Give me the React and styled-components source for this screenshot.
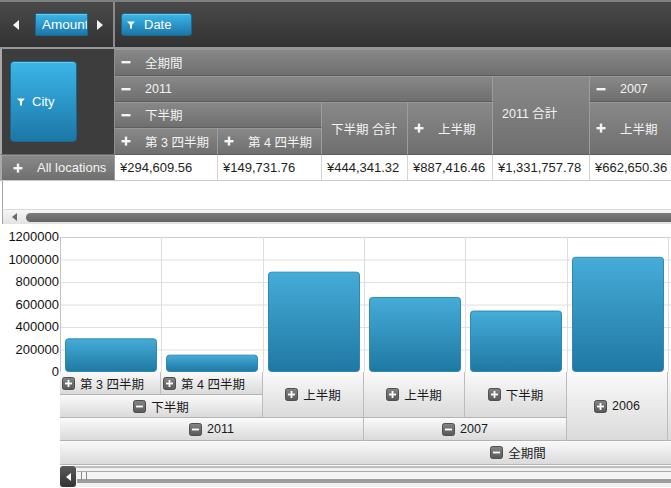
import React from 'react';
import styled, { createGlobalStyle } from 'styled-components';

const GlobalStyle = createGlobalStyle`
  html, body {
    margin: 0;
    padding: 0;
    background: #ffffff;
    overflow: hidden;
  }
  body {
    font-family: "Liberation Sans", "Noto Sans CJK JP", sans-serif;
  }
`;

const Page = styled.div`
  width: 671px;
  height: 488px;
  overflow: hidden;
  position: relative;
`;

/* ---------- field toolbar ---------- */

const Toolbar = styled.div`
  display: flex;
  height: 49px;
  box-sizing: border-box;
  border-top: 2px solid #7f7f7f;
  border-bottom: 2px solid #969696;
  background: linear-gradient(#4a4a4a, #323232);
`;

const ToolbarSection = styled.div`
  display: flex;
  align-items: center;
  width: ${p => p.$width || 'auto'};
  flex: ${p => (p.$width ? 'none' : '1')};
  box-sizing: border-box;
  padding-left: ${p => p.$pad}px;
  border-right: ${p => (p.$divider ? '2px solid #8b8b8b' : 'none')};
`;

const Arrow = styled.span`
  width: 0;
  height: 0;
  border-top: 5px solid transparent;
  border-bottom: 5px solid transparent;
  ${p => (p.$dir === 'left' ? 'border-right: 6px solid #f4f4f4;' : 'border-left: 6px solid #f4f4f4;')}
  margin: ${p => p.$margin};
`;

const FieldButton = styled.div`
  display: flex;
  align-items: center;
  box-sizing: border-box;
  width: ${p => p.$w}px;
  height: ${p => p.$h}px;
  padding-left: ${p => p.$pad}px;
  gap: ${p => p.$gap || 0}px;
  border: 1px solid #1a6892;
  border-radius: ${p => p.$radius}px;
  background: linear-gradient(#3cb6e8, #2a93c6 55%, #1c77a4);
  box-shadow: inset 0 1px 0 rgba(255, 255, 255, 0.25);
  color: #ffffff;
  font-size: ${p => p.$size || 13}px;
  white-space: nowrap;
  overflow: hidden;
`;

/* ---------- pivot grid ---------- */

const PivotGrid = styled.div`
  display: grid;
  grid-template-columns: 115px 103px 104px 86px 85px 97px 120px;
  grid-template-rows: 27px 26px 26px 27px 26px;
  width: 710px;
`;

const CornerCell = styled.div`
  grid-column: 1;
  grid-row: 1 / 5;
  display: flex;
  align-items: flex-start;
  padding: 12px 0 0 8px;
  box-sizing: border-box;
  background: #3d3d3d;
  border-left: 2px solid #a9a9a9;
  border-right: 1px solid #8e8e8e;
  border-bottom: 1px solid #6a6a6a;
`;

const HeaderCell = styled.div`
  grid-column: ${p => p.$col};
  grid-row: ${p => p.$row};
  display: flex;
  align-items: center;
  box-sizing: border-box;
  padding-left: ${p => (p.$icon ? 6 : 9)}px;
  padding-bottom: ${p => p.$lift || 0}px;
  background: linear-gradient(#898989, #6f6f6f);
  border-right: 1px solid #9d9d9d;
  border-bottom: 1px solid #5c5c5c;
  box-shadow: inset 0 1px 0 #979797;
  color: #f3f3f3;
  font-size: 12.5px;
  white-space: nowrap;
  overflow: hidden;
`;

const SignBox = styled.span`
  display: inline-flex;
  width: 10px;
  height: 10px;
  margin-right: 14px;
  flex: none;
`;

const Sign = ({ plus }) => (
  <SignBox>
    <svg width="10" height="10" viewBox="0 0 10 10">
      <rect x="0.5" y="4" width="9" height="2.4" fill="#f4f4f4" />
      {plus && <rect x="3.8" y="0.6" width="2.4" height="9" fill="#f4f4f4" />}
    </svg>
  </SignBox>
);

const RowHeaderCell = styled(HeaderCell)`
  grid-column: 1;
  grid-row: 5;
  padding-left: 11px;
  font-size: 13px;
  border-left: 2px solid #a9a9a9;
  border-bottom: 1px solid #c9c9c9;
`;

const ValueCell = styled.div`
  grid-row: 5;
  grid-column: ${p => p.$col};
  display: flex;
  align-items: center;
  box-sizing: border-box;
  padding-left: 5px;
  background: #ffffff;
  border-right: 1px solid #d4d4d4;
  border-bottom: 1px solid #c9c9c9;
  color: #1e1e1e;
  font-size: 13px;
  white-space: nowrap;
`;

const BlankArea = styled.div`
  height: 28px;
  margin-left: 2px;
  border-left: 1px solid #a3a3a3;
`;

const PivotScroll = styled.div`
  display: flex;
  align-items: center;
  height: 15px;
  margin-left: 2px;
  box-sizing: border-box;
  border-left: 1px solid #a3a3a3;
  border-top: 1px solid #d9d9d9;
  background: linear-gradient(#f6f6f6, #e2e2e2);
`;

const SmallArrow = styled.span`
  width: 0;
  height: 0;
  border-top: 4px solid transparent;
  border-bottom: 4px solid transparent;
  border-right: 5px solid #6b6b6b;
  margin: 0 9px 0 9px;
`;

const PivotThumb = styled.div`
  flex: 1;
  height: 9px;
  border-radius: 5px 0 0 5px;
  background: linear-gradient(#7a7a7a, #646464);
`;

/* ---------- chart ---------- */

const ChartSection = styled.div`
  display: flex;
  margin-top: 2px;
`;

const YAxis = styled.div`
  display: flex;
  flex-direction: column;
  width: 60px;
  flex: none;
`;

const YLabel = styled.div`
  height: 22.5px;
  line-height: 22.5px;
  text-align: right;
  padding-right: 1px;
  font-size: 13px;
  color: #111111;
`;

const PlotColumn = styled.div`
  display: flex;
  flex-direction: column;
  padding-top: 11px;
  flex: 1;
  min-width: 0;
`;

const PlotSvg = styled.svg`
  display: block;
  overflow: visible;
`;

const AxisGrid = styled.div`
  display: grid;
  grid-template-columns: 101px 102px 101px 101px 102px 101px 102px 101px 106px;
  grid-template-rows: 23px 23px 23px 24px;
  width: 917px;
`;

const AxisCell = styled.div`
  grid-column: ${p => p.$col};
  grid-row: ${p => p.$row};
  display: flex;
  align-items: center;
  justify-content: ${p => (p.$start ? 'flex-start' : 'center')};
  padding-left: ${p => (p.$start ? 2 : 0)}px;
  gap: 5px;
  box-sizing: border-box;
  background: linear-gradient(#fafafa, #dadada);
  border-right: 1px solid #bcbcbc;
  border-bottom: 1px solid #b3b3b3;
  color: #1b1b1b;
  font-size: 12.5px;
  white-space: nowrap;
`;

const AxisIcon = ({ plus }) => (
  <svg width="13" height="13" viewBox="0 0 13 13" style={{ flex: 'none' }}>
    <defs>
      <linearGradient id="axisIconFill" x1="0" y1="0" x2="0" y2="1">
        <stop offset="0" stopColor="#858585" />
        <stop offset="1" stopColor="#585858" />
      </linearGradient>
    </defs>
    <rect x="0.5" y="0.5" width="12" height="12" rx="2" fill="url(#axisIconFill)" stroke="#4f4f4f" />
    <rect x="3" y="5.6" width="7" height="1.8" fill="#ffffff" />
    {plus && <rect x="5.6" y="3" width="1.8" height="7" fill="#ffffff" />}
  </svg>
);

const ChartScroll = styled.div`
  display: flex;
  height: 21px;
  margin-top: 1px;
`;

const ScrollButton = styled.div`
  display: flex;
  align-items: center;
  justify-content: center;
  width: 16px;
  flex: none;
  border-radius: 3px;
  background: linear-gradient(#5a5a5a, #333333);
`;

const WhiteArrow = styled.span`
  width: 0;
  height: 0;
  border-top: 4px solid transparent;
  border-bottom: 4px solid transparent;
  border-right: 5px solid #ffffff;
`;

const ScrollTrack = styled.div`
  flex: 1;
  display: flex;
  align-items: flex-start;
  box-sizing: border-box;
  border-top: 2px solid #bdbdbd;
  background: #f1f1f1;
  padding-top: 3px;
`;

const ScrollThumb = styled.div`
  flex: 1;
  display: flex;
  align-items: center;
  height: 12px;
  margin-left: 1px;
  box-sizing: border-box;
  border-top: 1px solid #aaaaaa;
  border-bottom: 4px solid #9d9d9d;
  background: #f4f4f4;
`;

const Grip = styled.span`
  width: 4px;
  height: 8px;
  margin-left: 4px;
  border-left: 1px solid #8a8a8a;
  border-right: 1px solid #8a8a8a;
`;

const FilterIcon = ({ size = 8 }) => (
  <svg width={size} height={size} viewBox="0 0 8 8" style={{ flex: 'none' }}>
    <path d="M0 0.5 H8 L5 3.8 V7.5 H3 V3.8 Z" fill="#ffffff" />
  </svg>
);

const yLabels = ['1200000', '1000000', '800000', '600000', '400000', '200000', '0'];
const barValues = [294609.56, 149731.76, 887416.46, 662650.36, 541800, 1019500];
const CAT = 101.33;
const PLOT_H = 135;
const MAX = 1200000;

const values = [
  { col: 2, text: '¥294,609.56' },
  { col: 3, text: '¥149,731.76' },
  { col: 4, text: '¥444,341.32' },
  { col: 5, text: '¥887,416.46' },
  { col: 6, text: '¥1,331,757.78' },
  { col: 7, text: '¥662,650.36' },
];

export default function App() {
  return (
    <Page>
      <GlobalStyle />
      <Toolbar>
        <ToolbarSection $width="115px" $pad={13} $divider>
          <Arrow $dir="left" $margin="0 16px 0 0" />
          <FieldButton $w={53} $h={23} $pad={6} $radius={1} $size={13.5}>Amount</FieldButton>
          <Arrow $dir="right" $margin="0 0 0 9px" />
        </ToolbarSection>
        <ToolbarSection $pad={6}>
          <FieldButton $w={71} $h={23} $pad={5} $gap={9} $radius={3}>
            <FilterIcon />
            Date
          </FieldButton>
        </ToolbarSection>
      </Toolbar>

      <PivotGrid>
        <CornerCell>
          <FieldButton $w={67} $h={81} $pad={6} $gap={7} $radius={4}>
            <FilterIcon />
            City
          </FieldButton>
        </CornerCell>
        <HeaderCell $col="2 / 8" $row="1" $icon><Sign />全期間</HeaderCell>
        <HeaderCell $col="2 / 6" $row="2" $icon><Sign />2011</HeaderCell>
        <HeaderCell $col="6" $row="2 / 5" $lift={6}>2011 合計</HeaderCell>
        <HeaderCell $col="7" $row="2" $icon><Sign />2007</HeaderCell>
        <HeaderCell $col="2 / 4" $row="3" $icon><Sign />下半期</HeaderCell>
        <HeaderCell $col="4" $row="3 / 5">下半期 合計</HeaderCell>
        <HeaderCell $col="5" $row="3 / 5" $icon><Sign plus />上半期</HeaderCell>
        <HeaderCell $col="7" $row="3 / 5" $icon><Sign plus />上半期</HeaderCell>
        <HeaderCell $col="2" $row="4" $icon><Sign plus />第 3 四半期</HeaderCell>
        <HeaderCell $col="3" $row="4" $icon><Sign plus />第 4 四半期</HeaderCell>
        <RowHeaderCell $icon><Sign plus />All locations</RowHeaderCell>
        {values.map(v => (
          <ValueCell key={v.col} $col={v.col}>{v.text}</ValueCell>
        ))}
      </PivotGrid>

      <BlankArea />
      <PivotScroll>
        <SmallArrow />
        <PivotThumb />
      </PivotScroll>

      <ChartSection>
        <YAxis>
          {yLabels.map(l => <YLabel key={l}>{l}</YLabel>)}
        </YAxis>
        <PlotColumn>
          <PlotSvg width="611" height={PLOT_H}>
            <defs>
              <linearGradient id="barFill" x1="0" y1="0" x2="0" y2="1">
                <stop offset="0" stopColor="#46acd8" />
                <stop offset="1" stopColor="#1f78a3" />
              </linearGradient>
            </defs>
            {[0, 1, 2, 3, 4, 5].map(i => (
              <line key={'h' + i} x1="0" x2="611" y1={i * 22.5 + 0.5} y2={i * 22.5 + 0.5} stroke={i === 0 ? '#cfcfcf' : '#e0e0e0'} />
            ))}
            {[0, 1, 2, 3, 4, 5, 6].map(i => (
              <line key={'v' + i} y1="0" y2={PLOT_H} x1={Math.round(i * CAT) + 0.5} x2={Math.round(i * CAT) + 0.5} stroke={i === 0 ? '#c4c4c4' : '#dedede'} />
            ))}
            {barValues.map((v, i) => {
              const h = (v / MAX) * PLOT_H;
              return (
                <rect
                  key={i}
                  x={Math.round(i * CAT) + 5.5}
                  y={PLOT_H - h}
                  width="91"
                  height={h - 0.5}
                  rx="3"
                  fill="url(#barFill)"
                  stroke="#2d89b4"
                />
              );
            })}
          </PlotSvg>
          <AxisGrid>
            <AxisCell $col="1" $row="1" $start><AxisIcon plus />第 3 四半期</AxisCell>
            <AxisCell $col="2" $row="1" $start><AxisIcon plus />第 4 四半期</AxisCell>
            <AxisCell $col="3" $row="1 / 3"><AxisIcon plus />上半期</AxisCell>
            <AxisCell $col="4" $row="1 / 3"><AxisIcon plus />上半期</AxisCell>
            <AxisCell $col="5" $row="1 / 3"><AxisIcon plus />下半期</AxisCell>
            <AxisCell $col="6" $row="1 / 4"><AxisIcon plus />2006</AxisCell>
            <AxisCell $col="7" $row="1 / 4" />
            <AxisCell $col="1 / 3" $row="2"><AxisIcon />下半期</AxisCell>
            <AxisCell $col="1 / 4" $row="3"><AxisIcon />2011</AxisCell>
            <AxisCell $col="4 / 6" $row="3"><AxisIcon />2007</AxisCell>
            <AxisCell $col="1 / 10" $row="4"><AxisIcon />全期間</AxisCell>
          </AxisGrid>
          <ChartScroll>
            <ScrollButton><WhiteArrow /></ScrollButton>
            <ScrollTrack>
              <ScrollThumb><Grip /></ScrollThumb>
            </ScrollTrack>
          </ChartScroll>
        </PlotColumn>
      </ChartSection>
    </Page>
  );
}
